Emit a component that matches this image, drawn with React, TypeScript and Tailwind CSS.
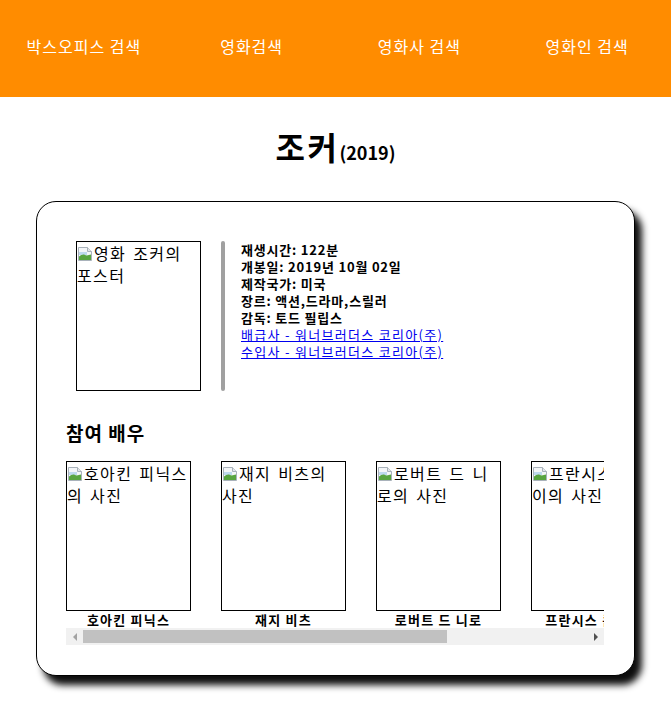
import React from 'react';

const font = { fontFamily: '"Noto Sans CJK KR", "Noto Sans", sans-serif' };

const navItems = ['박스오피스 검색', '영화검색', '영화사 검색', '영화인 검색'];

const info = ['재생시간: 122분', '개봉일: 2019년 10월 02일', '제작국가: 미국', '장르: 액션,드라마,스릴러', '감독: 토드 필립스'];

const links = ['배급사 - 워너브러더스 코리아(주)', '수입사 - 워너브러더스 코리아(주)'];

const actors = [
  { name: '호아킨 피닉스', alt: '호아킨 피닉스의 사진' },
  { name: '재지 비츠', alt: '재지 비츠의 사진' },
  { name: '로버트 드 니로', alt: '로버트 드 니로의 사진' },
  { name: '프란시스 콘로이', alt: '프란시스 콘로이의 사진' },
  { name: '브렛 컬렌', alt: '브렛 컬렌의 사진' }
];

const BrokenIcon: React.FC = () => (
  <svg width="16" height="16" viewBox="0 0 16 16" className="inline-block align-[-2px] mr-[1px]">
    <path d="M1.5 1.5h9l4 4v9h-13z" fill="#f4f6f8" stroke="#a9b2bb" />
    <path d="M10.5 1.5v4h4" fill="#e2e6ea" stroke="#a9b2bb" />
    <path d="M2 6h8v3H2z" fill="#bfd9ee" />
    <path d="M2 14V10.5c2-1.5 4-2.5 6-1.5s4 0 6-0.5V14z" fill="#59a540" />
  </svg>
);

const Broken: React.FC<{ alt: string }> = ({ alt }) => (
  <div className="w-[125px] h-[150px] shrink-0 border border-black overflow-hidden text-[16px] leading-[22px] tracking-[1.4px] [word-spacing:2px] text-black">
    <BrokenIcon />
    {alt}
  </div>
);

export default function App() {
  return (
    <div className="min-h-[715px] bg-white" style={font}>
      <header className="h-[97px] pb-[5px] bg-[#ff8c00] grid grid-cols-4 items-center">
        {navItems.map((n) => (
          <div key={n} className="text-center text-white text-[16px] tracking-[1px]">
            {n}
          </div>
        ))}
      </header>

      <div className="h-[104px] pb-[6px] flex items-center justify-center">
        <h1 className="font-bold text-black leading-none">
          <span className="text-[32px] tracking-[2.5px]">조커</span>
          <span className="text-[18px]">(2019)</span>
        </h1>
      </div>

      <div className="ml-[36px] w-[599px] rounded-[20px] border border-black bg-white pl-[29px] pr-[30px] pt-[39px] pb-[30px] shadow-[7px_9px_7px_rgba(0,0,0,0.95)]">
        <div className="flex pl-[10px]">
          <Broken alt="영화 조커의 포스터" />
          <div className="ml-[20px] w-[4px] h-[150px] rounded-full bg-[#a0a0a0]" />
          <div className="ml-[16px] text-[13px] font-bold leading-[17px] tracking-[0.8px] text-black">
            {info.map((t) => (
              <div key={t}>{t}</div>
            ))}
            {links.map((t) => (
              <div key={t}>
                <a href="#" className="text-[#0000ee] underline font-normal tracking-[1.3px]">
                  {t}
                </a>
              </div>
            ))}
          </div>
        </div>

        <h3 className="mt-[30px] mb-[16px] text-[19px] leading-[24px] font-bold tracking-[1px] text-black">참여 배우</h3>

        <div className="overflow-hidden">
          <div className="flex gap-[30px]">
            {actors.map((a) => (
              <div key={a.name} className="w-[125px] shrink-0">
                <Broken alt={a.alt} />
                <div className="text-center text-[13px] font-bold leading-[17px] tracking-[1.2px] whitespace-nowrap">{a.name}</div>
              </div>
            ))}
          </div>
        </div>

        <div className="h-[17px] bg-[#f1f1f1] flex items-center">
          <div className="w-[17px] h-[17px] flex items-center justify-center">
            <div className="w-0 h-0 border-y-[4px] border-y-transparent border-r-[4px] border-r-[#a3a3a3]" />
          </div>
          <div className="w-[364px] h-[13px] bg-[#c1c1c1]" />
          <div className="flex-1" />
          <div className="w-[17px] h-[17px] flex items-center justify-center">
            <div className="w-0 h-0 border-y-[4px] border-y-transparent border-l-[4px] border-l-[#505050]" />
          </div>
        </div>
      </div>
    </div>
  );
}
